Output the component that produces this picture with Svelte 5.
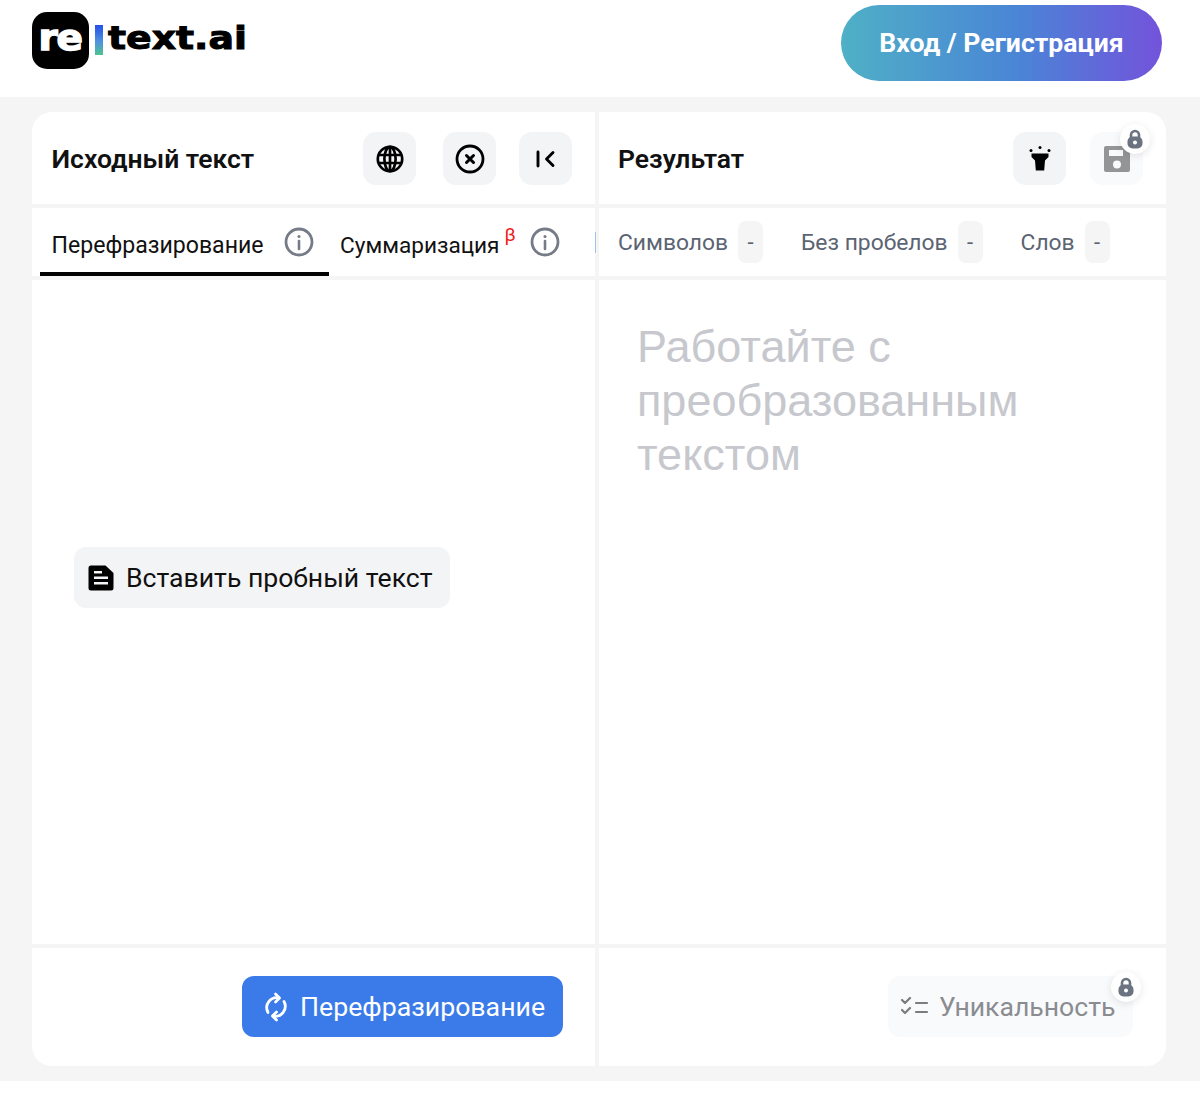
<script>
  const tabs = [
    { label: 'Символов', value: '-' },
    { label: 'Без пробелов', value: '-' },
    { label: 'Слов', value: '-' }
  ];
</script>

<div class="page">
  <header class="top">
    <div class="logo">
      <span class="mark"><span>re</span></span>
      <span class="bar"></span>
      <span class="word">text.ai</span>
    </div>
    <button class="login">Вход / Регистрация</button>
  </header>

  <main class="main">
    <div class="card">
      <section class="pane left">
        <div class="row head">
          <h2>Исходный текст</h2>
          <div class="tools">
            <button class="icon first" aria-label="Язык">
              <svg viewBox="0 0 28 28" width="28" height="28" fill="none" stroke="#000" stroke-width="2.7"><circle cx="14" cy="14" r="12.2"/><ellipse cx="14" cy="14" rx="5.6" ry="12.2"/><path d="M2.4 10h23.2M2.4 18h23.2M14 2v24"/></svg>
            </button>
            <button class="icon second" aria-label="Очистить">
              <svg viewBox="0 0 30 30" width="30" height="30" fill="none" stroke="#000" stroke-width="2.8" stroke-linecap="round"><circle cx="15" cy="15" r="13"/><path d="M11.5 11.5l7 7M18.500 11.500l-7 7" stroke-width="3"/></svg>
            </button>
            <button class="icon third" aria-label="Свернуть">
              <svg viewBox="0 0 20 18" width="20" height="18" fill="none" stroke="#000" stroke-width="2.900" stroke-linecap="round" stroke-linejoin="round"><path d="M2 2v14M17 2.500l-6.500 6.500 6.500 6.500"/></svg>
            </button>
          </div>
        </div>
        <div class="row tabs">
          <div class="tab active">
            <span>Перефразирование</span>
            <svg class="info" viewBox="0 0 30 30" width="30" height="30" fill="none" stroke="#757b87" stroke-width="2.800"><circle cx="15" cy="15" r="13"/><path d="M15 14v8" stroke-width="2.600" stroke-linecap="round"/><circle cx="15" cy="9.500" r="1.500" fill="#757b87" stroke="none"/></svg>
          </div>
          <div class="tab second-tab">
            <span>Суммаризация<sup>β</sup></span>
            <svg class="info" viewBox="0 0 30 30" width="30" height="30" fill="none" stroke="#757b87" stroke-width="2.800"><circle cx="15" cy="15" r="13"/><path d="M15 14v8" stroke-width="2.600" stroke-linecap="round"/><circle cx="15" cy="9.500" r="1.500" fill="#757b87" stroke="none"/></svg>
          </div>
          <i class="sliver"></i>
        </div>
        <div class="body center">
          <button class="sample">
            <svg viewBox="0 0 26 26" width="26" height="26"><path fill="#000" fill-rule="evenodd" d="M3 .5h14.500l8 7.500V23a2.500 2.500 0 0 1-2.500 2.500H3A2.500 2.500 0 0 1 .5 23V3A2.500 2.500 0 0 1 3 .500zM6 11.500v2.500h14v-2.500zM6 17v2.500h14V17zM6 6v2.500h8V6z"/></svg>
            Вставить пробный текст
          </button>
        </div>
        <div class="row foot">
          <button class="primary">
            <svg viewBox="0 0 26 30" width="26" height="30" fill="none" stroke="#fff" stroke-width="2.800" stroke-linecap="round" stroke-linejoin="round"><path d="M5 20.500A10 10 0 0 1 16 6"/><path d="M12.500 2L16.500 6l-4 4"/><path d="M21 9.500A10 10 0 0 1 10 24"/><path d="M13.500 28L9.500 24l4-4"/></svg>
            Перефразирование
          </button>
        </div>
      </section>

      <section class="pane right">
        <div class="row head">
          <h2>Результат</h2>
          <div class="tools">
            <button class="icon" aria-label="Подсветка">
              <svg viewBox="0 0 24 30" width="24" height="30"><path fill="#000" d="M3.500 9.500h17v3.500l-3.500 3.500-.8 10H7.800l-.8-10L3.500 13z"/><circle cx="12" cy="3.500" r="1.500" fill="#000"/><circle cx="3" cy="6.500" r="1.500" fill="#000"/><circle cx="21" cy="6.500" r="1.500" fill="#000"/></svg>
            </button>
            <div class="lockwrap">
              <button class="icon faded" aria-label="Сохранить">
                <svg viewBox="0 0 28 28" width="28" height="28"><path fill="#000" fill-rule="evenodd" d="M3 1h18l6 6v18a2 2 0 0 1-2 2H3a2 2 0 0 1-2-2V3a2 2 0 0 1 2-2zM6 5v6h14V5zM14 15.500a4 4 0 1 0 0 8 4 4 0 0 0 0-8z"/></svg>
              </button>
              <span class="lock save">
                <svg viewBox="0 0 16 20" width="16" height="20"><path d="M4 9V6a4 4 0 0 1 8 0v3" fill="none" stroke="#6b7280" stroke-width="2.600"/><rect x=".5" y="7.500" width="15" height="12" rx="5" fill="#6b7280"/><circle cx="8" cy="13.500" r="2" fill="#fff"/></svg>
              </span>
            </div>
          </div>
        </div>
        <div class="row stats">
          {#each tabs as t}
            <div class="stat"><span>{t.label}</span><b>{t.value}</b></div>
          {/each}
        </div>
        <div class="body">
          <p class="placeholder">Работайте с преобразованным текстом</p>
        </div>
        <div class="row foot">
          <div class="lockwrap">
            <button class="uniq">
              <svg viewBox="0 0 28 20" width="28" height="20" fill="none" stroke="#000" stroke-width="2.200" stroke-linecap="round" stroke-linejoin="round"><path d="M1 3l3 3 5-5M1 13l3 3 5-5M15 6h11M15 15h11"/></svg>
              Уникальность
            </button>
            <span class="lock uniqlock">
              <svg viewBox="0 0 16 20" width="16" height="20"><path d="M4 9V6a4 4 0 0 1 8 0v3" fill="none" stroke="#6b7280" stroke-width="2.600"/><rect x=".5" y="7.500" width="15" height="12" rx="5" fill="#6b7280"/><circle cx="8" cy="13.500" r="2" fill="#fff"/></svg>
            </span>
          </div>
        </div>
      </section>
    </div>
  </main>
</div>

<style>
  :global(body) { margin: 0; background: #fff; font-family: Roboto, "Liberation Sans", sans-serif; }
  .page { width: 1200px; height: 1098px; background: #fff; }
  button { font-family: inherit; border: 0; cursor: pointer; padding: 0; }

  .top { height: 97px; display: flex; justify-content: space-between; align-items: flex-start; padding: 0 38px 0 32px; box-sizing: border-box; }
  .logo { display: flex; align-items: flex-start; padding-top: 12px; }
  .mark { width: 57px; height: 57px; border-radius: 15px; background: #000; color: #fff; font: 700 36px/51px "DejaVu Sans", sans-serif; display: flex; justify-content: center; }
  .mark span { display: block; transform: scaleX(1.08); letter-spacing: -1px; -webkit-text-stroke: 1.500px #fff; }
  .bar { width: 8px; height: 30px; margin: 13px 0 0 6px; background: linear-gradient(#2450e8, #4f92e0 55%, #4fc48d); }
  .word { margin: 6px 0 0 5px; font: 700 32px/40px "DejaVu Sans", sans-serif; color: #000; -webkit-text-stroke: 1px #000; transform: scaleX(1.18); transform-origin: left center; }
  .login { margin-top: 5px; width: 321px; height: 76px; border-radius: 38px; color: #fff; font-size: 26.600px; font-weight: 700; padding-bottom: 2px; background: linear-gradient(90deg, #4fb0c6, #4a85d6 55%, #7353db); }

  .main { height: 984px; background: #f5f5f5; padding: 15px 34px 0 32px; box-sizing: border-box; }
  .card { height: 954px; border-radius: 20px; overflow: hidden; display: grid; grid-template-columns: 563px 567px; column-gap: 4px; }
  .pane { display: grid; grid-template-rows: 92px 68px 664px 118px; row-gap: 4px; }
  .row, .body { background: #fff; }
  .row { display: flex; align-items: center; box-sizing: border-box; }

  .head { padding: 1px 24px 0 19.500px; justify-content: space-between; }
  h2 { margin: 0; font-size: 26.500px; font-weight: 600; color: #111; }
  .right .head { padding: 1px 23px 0 19px; }
  .tools { display: flex; gap: 24px; position: relative; top: 0; }
  .icon { width: 53px; height: 53px; border-radius: 13px; background: #f3f4f6; display: flex; align-items: center; justify-content: center; }
  .left .tools { gap: 0; margin-right: -1px; }
  .second { margin-left: 27px; }
  .third { margin-left: 23px; }
  .faded svg { opacity: 0.4; }
  .faded { background: #f9fafb; }
  .lockwrap { position: relative; }
  .lock { position: absolute; width: 30px; height: 30px; border-radius: 50%; background: #fff; box-shadow: 0 2px 8px rgba(0,0,0,.1); display: flex; align-items: center; justify-content: center; }
  .save { top: -8px; right: -7px; }
  .uniqlock { top: -4px; right: -8px; }

  .tabs { padding-left: 8px; position: relative; align-items: stretch; }
  .tab { display: flex; align-items: center; font-size: 23.100px; color: #111; white-space: nowrap; box-sizing: border-box; padding-top: 10px; }
  .tab.active { width: 289px; padding-left: 11.500px; border-bottom: 4px solid #000; gap: 20px; }
  .tab:not(.active) { padding-left: 11px; gap: 14px; padding-bottom: 4px; }
  .second-tab { font-size: 22.600px; }
  .tab sup { color: #f01a1a; font-size: 19px; line-height: 0; margin-left: 5px; position: relative; top: -3px; vertical-align: super; }
  .info { flex: none; position: relative; top: -3px; }
  .sliver { position: absolute; left: 563px; top: 24px; width: 1px; height: 21px; background: #9ec3ee; }

  .stats { padding-left: 19px; gap: 38px; }
  .stat { display: flex; align-items: center; gap: 10px; font-size: 22.800px; color: #5b6472; }
  .stat b { width: 25px; height: 42px; border-radius: 8px; background: #f5f5f5; font-weight: 400; font-size: 22px; display: flex; align-items: center; justify-content: center; }

  .body.center { display: flex; align-items: flex-start; padding: 267px 0 0 42px; box-sizing: border-box; }
  .sample { height: 61px; width: 376px; border-radius: 12px; background: #f3f4f6; display: flex; align-items: center; gap: 12px; padding-left: 14px; box-sizing: border-box; font-size: 26.600px; color: #111; }

  .placeholder { margin: 0; padding: 40px 120px 0 38px; font-size: 45px; line-height: 54px; color: #c6c8cd; font-family: "Liberation Sans", sans-serif; }

  .foot { justify-content: flex-end; align-items: flex-start; padding: 28px 32px 0 0; }
  .primary { width: 321px; height: 61px; border-radius: 12px; background: #3a7be9; color: #fff; font-size: 26.700px; display: flex; align-items: center; gap: 11px; padding-left: 21px; box-sizing: border-box; }
  .right .foot { padding-right: 33px; }
  .uniq { width: 245px; height: 61px; border-radius: 12px; background: #f9fafb; color: #8a8c91; font-size: 26.600px; display: flex; align-items: center; gap: 10px; padding-left: 13px; box-sizing: border-box; white-space: nowrap; }
  .uniq svg { opacity: .5; }
</style>
